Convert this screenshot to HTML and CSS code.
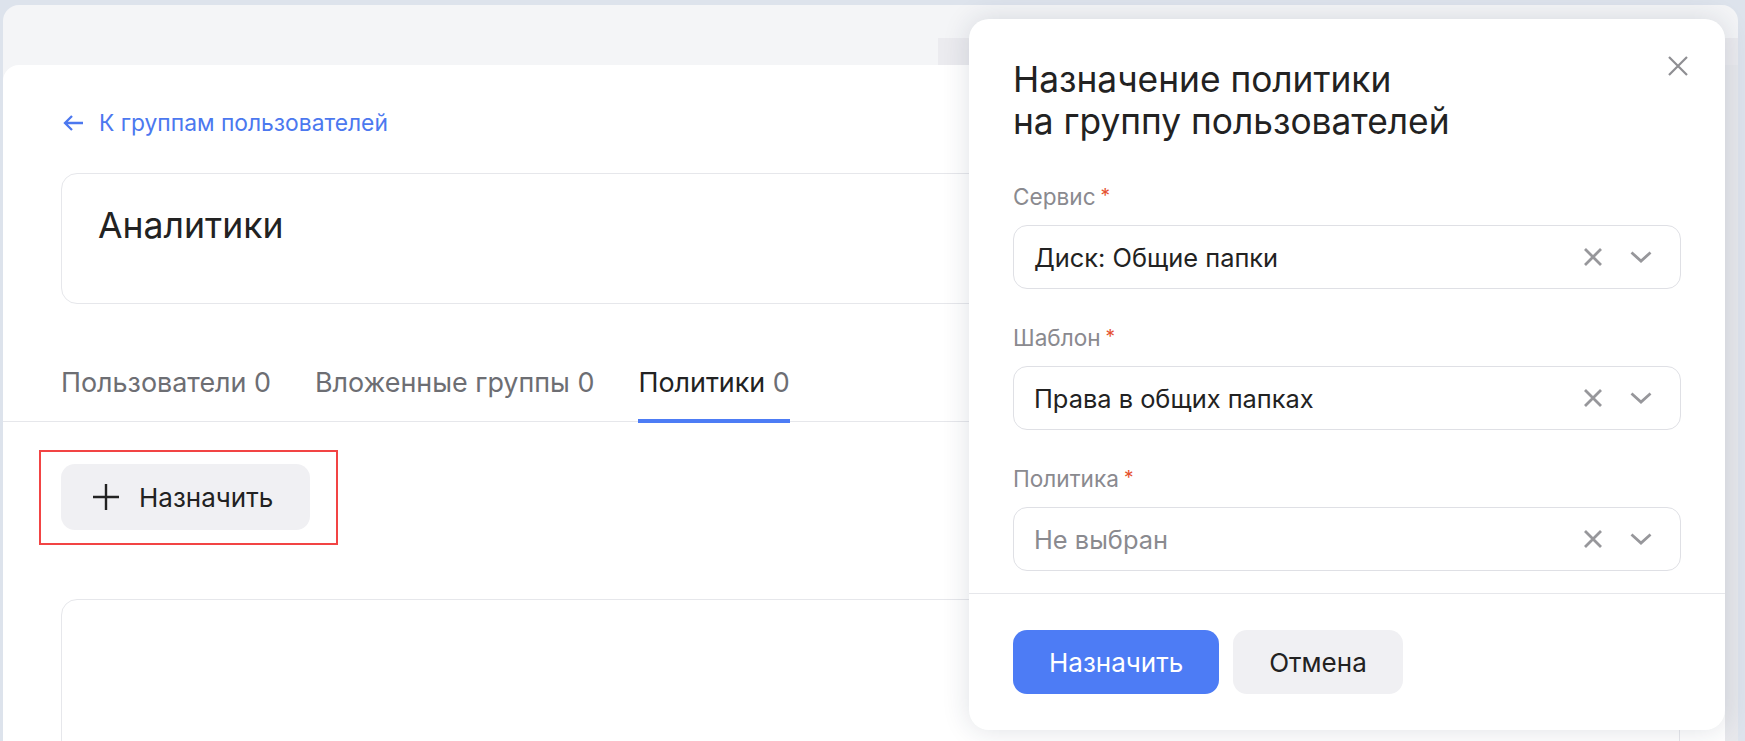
FILE: index.html
```html
<!DOCTYPE html>
<html>
  <head>
    <title>Аналитики</title>
    <link rel="stylesheet" href="styles.css">
  </head>
  <body>
    <div class="panel">
      <div class="panel-top"></div>
      <main class="page">
        <a class="back" href="#">
          <svg width="22" height="18" viewBox="0 0 22 18"><path d="M21 9H3M10 2L3 9l7 7" /></svg>
          К группам пользователей
        </a>

        <section class="group-card">
          <h1>Аналитики</h1>
        </section>

        <nav class="tabs">
          <a class="tab" href="#">Пользователи <span class="count">0</span></a>
          <a class="tab" href="#">Вложенные группы <span class="count">0</span></a>
          <a class="tab active" href="#">Политики <span class="count">0</span></a>
        </nav>

        <div class="toolbar">
          <div class="highlight">
            <button class="add-btn" type="button">
              <svg width="26" height="26" viewBox="0 0 26 26"><path d="M13 0v26M0 13h26" /></svg>
              Назначить
            </button>
          </div>
        </div>

        <section class="list-card"></section>
      </main>
    </div>

    <!-- drawer that stays under the modal -->
    <div class="under"></div>

    <aside class="modal">
      <div class="modal-head">
        <h2>Назначение политики<br />на группу пользователей</h2>
        <button class="close" type="button">
          <svg width="20" height="20" viewBox="0 0 20 20"><path d="M1 1l18 18M19 1L1 19" /></svg>
        </button>
      </div>

      <div class="modal-body">
        <div class="field">
          <label>Сервис<span class="req">*</span></label>
          <div class="select">
            <span class="value">Диск: Общие папки</span>
            <svg class="clear" width="18" height="18" viewBox="0 0 18 18"><path d="M1 1l16 16M17 1L1 17" /></svg>
            <svg class="chevron" width="22" height="12" viewBox="0 0 22 12"><path d="M1.5 1.5l9.5 8.5 9.5-8.5" /></svg>
          </div>
        </div>

        <div class="field">
          <label>Шаблон<span class="req">*</span></label>
          <div class="select">
            <span class="value">Права в общих папках</span>
            <svg class="clear" width="18" height="18" viewBox="0 0 18 18"><path d="M1 1l16 16M17 1L1 17" /></svg>
            <svg class="chevron" width="22" height="12" viewBox="0 0 22 12"><path d="M1.5 1.5l9.5 8.5 9.5-8.5" /></svg>
          </div>
        </div>

        <div class="field">
          <label>Политика<span class="req">*</span></label>
          <div class="select">
            <span class="value empty">Не выбран</span>
            <svg class="clear" width="18" height="18" viewBox="0 0 18 18"><path d="M1 1l16 16M17 1L1 17" /></svg>
            <svg class="chevron" width="22" height="12" viewBox="0 0 22 12"><path d="M1.5 1.5l9.5 8.5 9.5-8.5" /></svg>
          </div>
        </div>
      </div>

      <div class="modal-foot">
        <button class="btn primary" type="button">Назначить</button>
        <button class="btn" type="button">Отмена</button>
      </div>
    </aside>
  </body>
</html>
```

FILE: styles.css
```css
* {
  box-sizing: border-box;
}
body {
  margin: 0;
  height: 741px;
  overflow: hidden;
  background-color: #dde3ec;
  font-family: Inter, "Noto Sans", sans-serif;
  color: #222222;
}
button {
  font-family: inherit;
  border: none;
  cursor: pointer;
}
a {
  text-decoration: none;
}

/* page behind the modal */
.panel {
  margin: 5px 7px 0 3px;
  height: 736px;
  background-color: #f4f5f7;
  border-radius: 16px 16px 0 0;
}
.panel-top {
  height: 60px;
}
.page {
  height: 676px;
  padding: 42px 58px 0;
  background-color: #ffffff;
  border-radius: 16px 16px 0 0;
}
.back {
  display: inline-flex;
  align-items: center;
  gap: 15px;
  height: 32px;
  font-size: 22.8px;
  line-height: 32px;
  color: #4c78ef;
}
.back svg {
  margin-left: 1px;
  fill: none;
  stroke: #4c78ef;
  stroke-width: 2.3;
}
.group-card {
  height: 131px;
  margin-top: 34px;
  padding: 30px 36px;
  border: 1px solid #e6e7eb;
  border-radius: 16px;
}
.group-card h1 {
  margin: 0;
  font-size: 35.6px;
  line-height: 44px;
  font-weight: 400;
}
.tabs {
  display: flex;
  gap: 44px;
  margin: 60px -58px 0;
  padding: 0 58px;
  border-bottom: 1px solid #e6e7eb;
}
.tab {
  padding-bottom: 19px;
  margin-bottom: -2px;
  font-size: 26.9px;
  line-height: 36px;
  color: #6d6e73;
  border-bottom: 4px solid transparent;
}
.tab.active {
  color: #222222;
  border-bottom-color: #4d7cf5;
}
.tab .count {
  color: #6d6e73;
}
.toolbar {
  margin-top: 28px;
}
.highlight {
  display: inline-block;
  margin-left: -22px;
  padding: 12px 26px 13px 20px;
  border: 2px solid #f24444;
}
.add-btn {
  display: flex;
  align-items: center;
  gap: 20px;
  height: 66px;
  padding: 0 37px 0 32px;
  font-size: 26px;
  color: #222222;
  background-color: #f0f0f3;
  border-radius: 14px;
}
.add-btn svg {
  fill: none;
  stroke: #222222;
  stroke-width: 2.4;
}
.list-card {
  height: 200px;
  margin-top: 54px;
  border: 1px solid #e6e7eb;
  border-radius: 16px;
}

/* modal */
.under {
  position: absolute;
  left: 938px;
  top: 38px;
  right: 7px;
  bottom: 0;
  border-top: 27px solid #ebebef;
  background: linear-gradient(to right, transparent 787px, #e7e8ec 787px);
}
.modal {
  position: absolute;
  left: 969px;
  top: 19px;
  width: 756px;
  height: 711px;
  background-color: #ffffff;
  border-radius: 20px;
  box-shadow: 0 0 28px rgba(30, 40, 70, 0.14);
}
.modal-head {
  position: relative;
  padding: 40px 44px 0;
}
.modal-head h2 {
  margin: 0;
  font-size: 35.3px;
  line-height: 42px;
  font-weight: 400;
}
.close {
  position: absolute;
  top: 37px;
  right: 37px;
  padding: 0;
  background: none;
  line-height: 0;
}
.close svg {
  fill: none;
  stroke: #8e8e92;
  stroke-width: 2.2;
}
.modal-body {
  padding: 41px 44px 22px;
  border-bottom: 1px solid #e6e7eb;
}
.field + .field {
  margin-top: 36px;
}
.field label {
  display: block;
  height: 26px;
  margin-bottom: 15px;
  font-size: 22.6px;
  line-height: 26px;
  color: #8a8a8f;
}
.req {
  margin-left: 5px;
  font-size: 19px;
  line-height: 1;
  vertical-align: 3px;
  color: #e5512f;
}
.select {
  display: flex;
  align-items: center;
  height: 64px;
  padding: 0 28px 0 20px;
  border: 1px solid #dfe0e5;
  border-radius: 14px;
}
.select .value {
  flex: 1;
  font-size: 25.4px;
  color: #222222;
}
.select .value.empty {
  color: #8a8a8f;
}
.select svg {
  fill: none;
  stroke: #97979b;
  stroke-width: 2.8;
}
.select .clear {
  margin-right: 28px;
}
.modal-foot {
  display: flex;
  gap: 14px;
  padding: 36px 44px 0;
}
.btn {
  height: 64px;
  padding: 0 36px;
  font-size: 26px;
  color: #222222;
  background-color: #f0f0f3;
  border-radius: 14px;
}
.btn.primary {
  color: #ffffff;
  background-color: #4d7cf5;
}
```
